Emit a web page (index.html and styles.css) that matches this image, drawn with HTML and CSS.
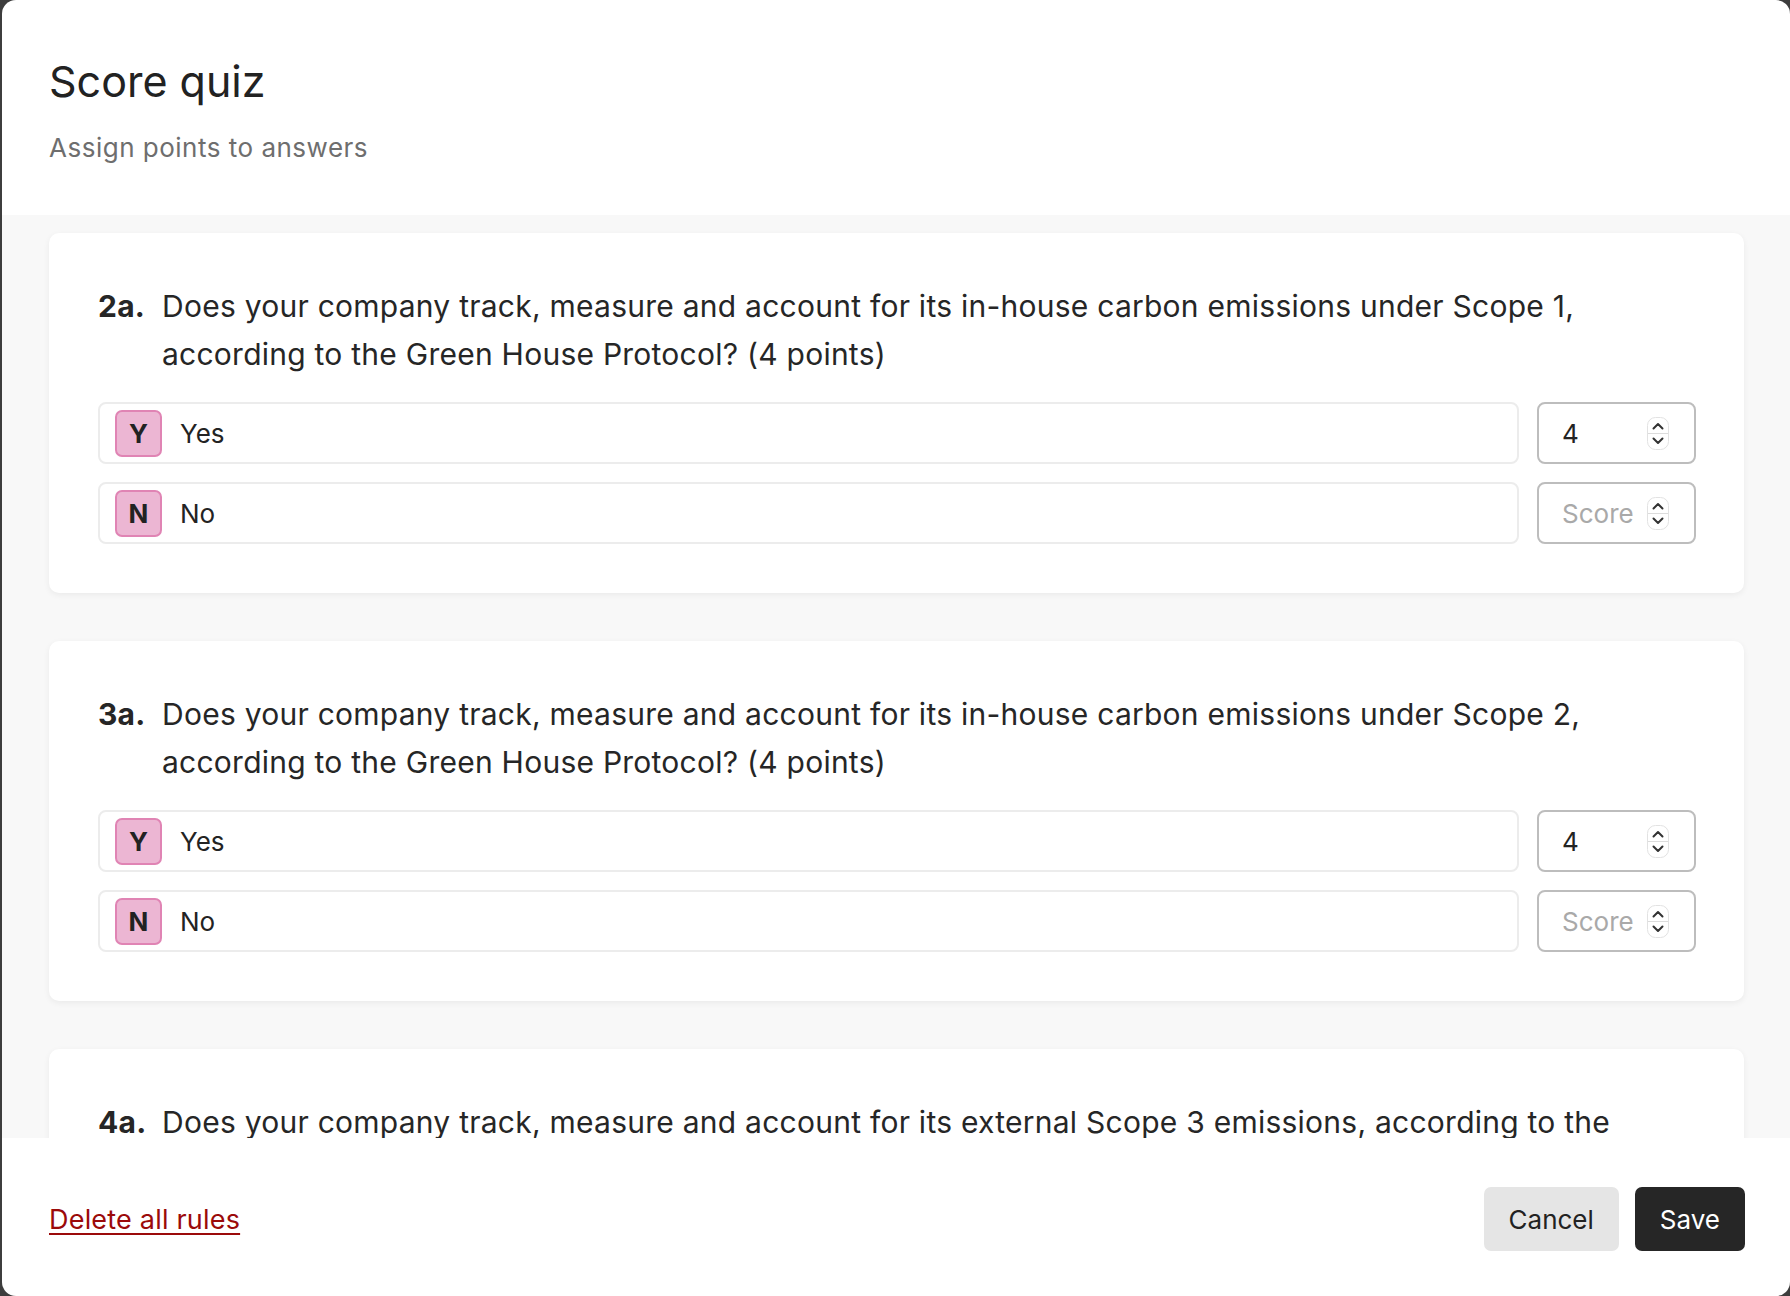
FILE: index.html
```html
<!DOCTYPE html>
<html lang="en">
<head>
<meta charset="UTF-8">
<meta name="viewport" content="width=device-width, initial-scale=1.0">
<title>Score quiz</title>
<link rel="stylesheet" href="styles.css">
</head>
<body>
<div class="modal">
  <div class="modal-header">
    <h1 class="title">Score quiz</h1>
    <p class="subtitle">Assign points to answers</p>
  </div>

  <div class="modal-body">

    <div class="card">
      <div class="question">
        <span class="q-num">2a.</span>
        <span class="q-text">Does your company track, measure and account for its in-house carbon emissions under Scope 1, according to the Green House Protocol? (4 points)</span>
      </div>
      <div class="answers">
        <div class="answer-row">
          <div class="answer"><span class="badge">Y</span><span class="answer-label">Yes</span></div>
          <div class="score"><span class="score-value">4</span><svg class="spin" width="22" height="33" viewBox="0 0 22 33"><rect x="0.5" y="0.5" width="21" height="32" rx="8" fill="#fff" stroke="#e2e2e2"/><line x1="1" y1="16.5" x2="21" y2="16.5" stroke="#dcdcdc"/><path d="M6.5 11.5 L11 7 L15.5 11.5" fill="none" stroke="#333" stroke-width="2" stroke-linecap="round" stroke-linejoin="round"/><path d="M6.5 21.5 L11 26 L15.5 21.5" fill="none" stroke="#333" stroke-width="2" stroke-linecap="round" stroke-linejoin="round"/></svg></div>
        </div>
        <div class="answer-row">
          <div class="answer"><span class="badge">N</span><span class="answer-label">No</span></div>
          <div class="score"><span class="score-value placeholder">Score</span><svg class="spin" width="22" height="33" viewBox="0 0 22 33"><rect x="0.5" y="0.5" width="21" height="32" rx="8" fill="#fff" stroke="#e2e2e2"/><line x1="1" y1="16.5" x2="21" y2="16.5" stroke="#dcdcdc"/><path d="M6.5 11.5 L11 7 L15.5 11.5" fill="none" stroke="#333" stroke-width="2" stroke-linecap="round" stroke-linejoin="round"/><path d="M6.5 21.5 L11 26 L15.5 21.5" fill="none" stroke="#333" stroke-width="2" stroke-linecap="round" stroke-linejoin="round"/></svg></div>
        </div>
      </div>
    </div>

    <div class="card">
      <div class="question">
        <span class="q-num">3a.</span>
        <span class="q-text">Does your company track, measure and account for its in-house carbon emissions under Scope 2, according to the Green House Protocol? (4 points)</span>
      </div>
      <div class="answers">
        <div class="answer-row">
          <div class="answer"><span class="badge">Y</span><span class="answer-label">Yes</span></div>
          <div class="score"><span class="score-value">4</span><svg class="spin" width="22" height="33" viewBox="0 0 22 33"><rect x="0.5" y="0.5" width="21" height="32" rx="8" fill="#fff" stroke="#e2e2e2"/><line x1="1" y1="16.5" x2="21" y2="16.5" stroke="#dcdcdc"/><path d="M6.5 11.5 L11 7 L15.5 11.5" fill="none" stroke="#333" stroke-width="2" stroke-linecap="round" stroke-linejoin="round"/><path d="M6.5 21.5 L11 26 L15.5 21.5" fill="none" stroke="#333" stroke-width="2" stroke-linecap="round" stroke-linejoin="round"/></svg></div>
        </div>
        <div class="answer-row">
          <div class="answer"><span class="badge">N</span><span class="answer-label">No</span></div>
          <div class="score"><span class="score-value placeholder">Score</span><svg class="spin" width="22" height="33" viewBox="0 0 22 33"><rect x="0.5" y="0.5" width="21" height="32" rx="8" fill="#fff" stroke="#e2e2e2"/><line x1="1" y1="16.5" x2="21" y2="16.5" stroke="#dcdcdc"/><path d="M6.5 11.5 L11 7 L15.5 11.5" fill="none" stroke="#333" stroke-width="2" stroke-linecap="round" stroke-linejoin="round"/><path d="M6.5 21.5 L11 26 L15.5 21.5" fill="none" stroke="#333" stroke-width="2" stroke-linecap="round" stroke-linejoin="round"/></svg></div>
        </div>
      </div>
    </div>

    <div class="card">
      <div class="question">
        <span class="q-num">4a.</span>
        <span class="q-text">Does your company track, measure and account for its external Scope 3 emissions, according to the Green House Protocol? (4 points)</span>
      </div>
    </div>

  </div>

  <div class="modal-footer">
    <a class="delete-link" href="#">Delete all rules</a>
    <div class="buttons">
      <button class="btn btn-cancel">Cancel</button>
      <button class="btn btn-save">Save</button>
    </div>
  </div>
</div>
</body>
</html>
```

FILE: styles.css
```css
body {
    margin: 0;
    background: #3d3d3d;
    font-family: Inter, "Noto Sans", sans-serif;
    color: #232323;
}

.modal {
    margin-left: 2px;
    height: 1296px;
    background: #fff;
    border-radius: 14px;
    display: flex;
    flex-direction: column;
    overflow: hidden;
}

.modal-header {
    height: 215px;
    box-sizing: border-box;
    padding: 55px 47px 0;
    flex-shrink: 0;
}

.title {
    margin: 0;
    font-size: 43px;
    line-height: 52px;
    font-weight: 400;
    color: #222;
}

.subtitle {
    margin: 24px 0 0;
    font-size: 26px;
    line-height: 34px;
    letter-spacing: 0.5px;
    color: #6e6e6e;
}

.modal-body {
    flex: 1;
    background: #f8f8f8;
    padding: 18px 46px 0 47px;
    overflow: hidden;
}

.card {
    background: #fff;
    border-radius: 10px;
    box-shadow: 0 2px 6px rgba(0, 0, 0, 0.06);
    padding: 49px 48px 49px 49px;
    margin-bottom: 48px;
}

.question {
    display: flex;
    font-size: 30px;
    line-height: 48px;
    letter-spacing: 0.25px;
    color: #262626;
}

.q-num {
    font-weight: 700;
    width: 64px;
    flex-shrink: 0;
}

.answers {
    margin-top: 24px;
    display: flex;
    flex-direction: column;
    gap: 18px;
}

.answer-row {
    display: flex;
    gap: 18px;
}

.answer {
    flex: 1;
    height: 62px;
    box-sizing: border-box;
    border: 2px solid #ececec;
    border-radius: 8px;
    display: flex;
    align-items: center;
    padding: 0 15px;
    gap: 18px;
}

.badge {
    width: 47px;
    height: 47px;
    box-sizing: border-box;
    border: 2px solid #e084b4;
    background: #ecb6d3;
    border-radius: 7px;
    display: flex;
    align-items: center;
    justify-content: center;
    font-weight: 700;
    font-size: 26px;
    color: #222;
}

.answer-label {
    font-size: 26px;
}

.score {
    width: 159px;
    height: 62px;
    box-sizing: border-box;
    border: 2px solid #bdbdbd;
    border-radius: 8px;
    display: flex;
    align-items: center;
    justify-content: space-between;
    padding: 0 25px 0 23px;
}

.score-value {
    font-size: 26px;
}

.placeholder {
    color: #a9a9a9;
}

.spin {
    display: block;
}

.modal-footer {
    height: 158px;
    flex-shrink: 0;
    box-sizing: border-box;
    padding: 4px 45px 0 47px;
    display: flex;
    align-items: center;
    justify-content: space-between;
}

.delete-link {
    color: #9b0a0a;
    font-size: 27px;
    letter-spacing: 0.2px;
    text-underline-offset: 4px;
}

.buttons {
    display: flex;
    gap: 16px;
}

.btn {
    height: 64px;
    border: none;
    border-radius: 7px;
    font-family: Inter, "Noto Sans", sans-serif;
    font-size: 26px;
    padding: 0 25px;
}

.btn-cancel {
    background: #e5e5e5;
    color: #222;
}

.btn-save {
    background: #262626;
    color: #fff;
}
```
